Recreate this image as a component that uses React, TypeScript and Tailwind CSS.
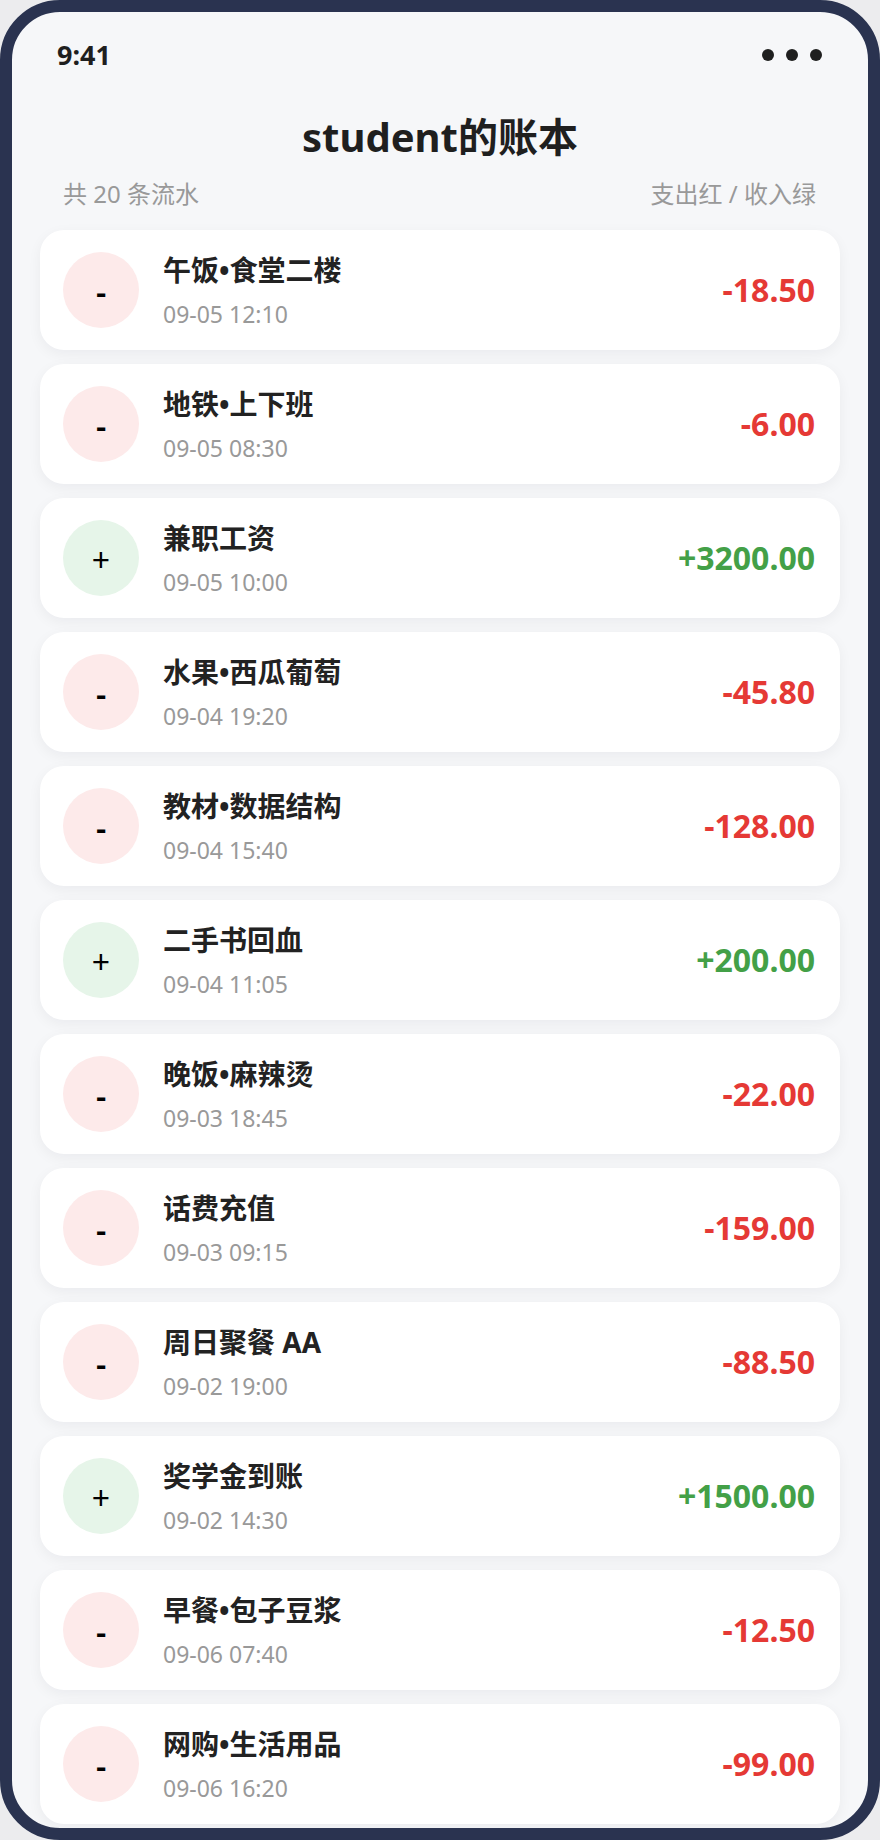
import type { FC } from "react";

type Entry = { title: string; time: string; amount: number };

const entries: Entry[] = [
  { title: "午饭•食堂二楼", time: "09-05 12:10", amount: -18.5 },
  { title: "地铁•上下班", time: "09-05 08:30", amount: -6 },
  { title: "兼职工资", time: "09-05 10:00", amount: 3200 },
  { title: "水果•西瓜葡萄", time: "09-04 19:20", amount: -45.8 },
  { title: "教材•数据结构", time: "09-04 15:40", amount: -128 },
  { title: "二手书回血", time: "09-04 11:05", amount: 200 },
  { title: "晚饭•麻辣烫", time: "09-03 18:45", amount: -22 },
  { title: "话费充值", time: "09-03 09:15", amount: -159 },
  { title: "周日聚餐 AA", time: "09-02 19:00", amount: -88.5 },
  { title: "奖学金到账", time: "09-02 14:30", amount: 1500 },
  { title: "早餐•包子豆浆", time: "09-06 07:40", amount: -12.5 },
  { title: "网购•生活用品", time: "09-06 16:20", amount: -99 },
];

const Row: FC<{ item: Entry }> = ({ item }) => {
  const income = item.amount > 0;
  const money = (income ? "+" : "-") + Math.abs(item.amount).toFixed(2);
  return (
    <div className="flex h-[120px] shrink-0 items-center rounded-[24px] bg-white pl-[23px] pr-[25px] shadow-[0_4px_14px_rgba(15,23,42,0.05)]">
      <div
        className={
          "flex h-[76px] w-[76px] shrink-0 items-center justify-center rounded-full pt-[4px] text-[32px] leading-none text-black " +
          (income ? "bg-[#e6f5e9]" : "bg-[#fdeaea]")
        }
      >
        {income ? "+" : <span className="font-semibold">-</span>}
      </div>
      <div className="ml-[24px] flex flex-1 flex-col">
        <span className="text-[28px] font-bold leading-[36px] text-[#222]">{item.title}</span>
        <span className="mt-[11px] text-[23px] leading-[30px] text-[#999]">{item.time}</span>
      </div>
      <span
        className={
          "text-[32px] font-bold leading-[40px] " + (income ? "text-[#43a047]" : "text-[#e53935]")
        }
      >
        {money}
      </span>
    </div>
  );
};

const App: FC = () => {
  return (
    <div
      className="h-[1840px] w-[880px] bg-[#ececee]"
      style={{ fontFamily: '"Noto Sans", "Noto Sans CJK SC", sans-serif' }}
    >
      <div className="flex h-full w-full flex-col overflow-hidden rounded-[60px] border-[12px] border-[#2a3350] bg-[#f6f7f9]">
        {/* status bar */}
        <div className="flex items-center justify-between pl-[45px] pr-[46px] pt-[28px]">
          <span className="text-[27px] font-bold leading-[30px] text-[#1f1f1f]">9:41</span>
          <div className="flex gap-[12px]">
            <span className="h-[12px] w-[12px] rounded-full bg-[#1f1f1f]" />
            <span className="h-[12px] w-[12px] rounded-full bg-[#1f1f1f]" />
            <span className="h-[12px] w-[12px] rounded-full bg-[#1f1f1f]" />
          </div>
        </div>

        <h1 className="mt-[43px] text-center text-[40px] font-bold leading-[48px] text-[#1f1f1f]">
          student的账本
        </h1>

        <div className="mt-[17px] flex justify-between pl-[51px] pr-[52px] text-[24px] leading-[32px] text-[#999]">
          <span>共 20 条流水</span>
          <span>支出红 / 收入绿</span>
        </div>

        <div className="mt-[20px] flex flex-col gap-[14px] px-[28px]">
          {entries.map((e) => (
            <Row key={e.title + e.time} item={e} />
          ))}
        </div>
      </div>
    </div>
  );
};

export default App;
